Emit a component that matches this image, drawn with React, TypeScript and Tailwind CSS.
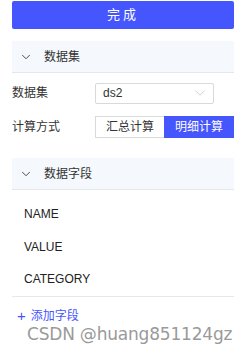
import { ChevronDown } from "lucide-react";

const fields = ["NAME", "VALUE", "CATEGORY"];

function SectionHeader({ title }: { title: string }) {
  return (
    <div className="flex h-[32px] items-center border-b border-[#e4e7ec] bg-[#f5f8fc] pl-[7px]">
      <ChevronDown size={14} strokeWidth={1.5} className="text-[#333]" />
      <span className="ml-[11px] text-[12px] text-[#333]">{title}</span>
    </div>
  );
}

export default function App() {
  return (
    <div className="h-[354px] w-[246px] overflow-hidden bg-white font-['Liberation_Sans','Noto_Sans_CJK_SC',sans-serif]">
      <div className="px-[12px] pt-[1px]">
        <button type="button" className="flex h-[28px] w-full items-center justify-center rounded-[2px] bg-[#4656ff] text-[13px] tracking-[3px] text-white">
          完成
        </button>

        <div className="mt-[12px]">
          <SectionHeader title="数据集" />
          <div className="mt-[10px] flex h-[20px] items-center">
            <span className="w-[83px] text-[12px] text-[#333]">数据集</span>
            <div className="flex h-[21px] w-[119px] items-center justify-between rounded-[2px] border border-[#d9d9d9] pl-[7px] pr-[4px]">
              <span className="text-[12px] text-[#333]">ds2</span>
              <ChevronDown size={18} strokeWidth={1} className="text-[#c0c0c0]" />
            </div>
          </div>
          <div className="mt-[13px] flex h-[22px] items-center">
            <span className="w-[83px] text-[12px] text-[#333]">计算方式</span>
            <div className="flex h-[22px] flex-1">
              <div className="flex w-[69px] items-center justify-center border border-r-0 border-[#d9d9d9] text-[12px] text-[#333]">汇总计算</div>
              <div className="flex flex-1 items-center justify-center bg-[#4656ff] text-[12px] text-white">明细计算</div>
            </div>
          </div>
        </div>

        <div className="mt-[20px]">
          <SectionHeader title="数据字段" />
          <div className="border-b border-[#e8e8e8] pt-[8px]">
            {fields.map((f) => (
              <div key={f} className="flex h-[32.5px] items-center pl-[12px] text-[12px] text-[#222]">
                {f}
              </div>
            ))}
          </div>
          <div className="flex items-center pl-[5px] pt-[11px] text-[12px] leading-[16px] text-[#4656ff]">
            <span className="text-[15px] leading-[16px]">+</span>
            <span className="ml-[5px]">添加字段</span>
          </div>
        </div>
      </div>
      <div className="mt-[3px] pl-[27px] text-[17px] leading-[14px] text-[#9a9a9a] font-['DejaVu_Sans','Liberation_Sans',sans-serif] tracking-[-0.2px]">
        CSDN @huang851124gz
      </div>
    </div>
  );
}
